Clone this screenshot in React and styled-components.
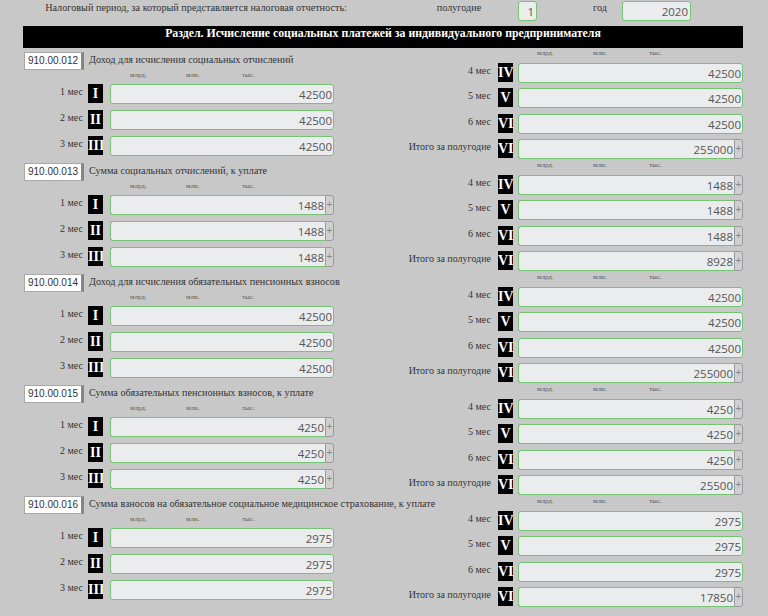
import React from 'react';
import styled, { createGlobalStyle } from 'styled-components';

const sections = [
  { code: '910.00.012', title: 'Доход для исчисления социальных отчислений', value: '42500', total: '255000', plusAll: false },
  { code: '910.00.013', title: 'Сумма социальных отчислений, к уплате', value: '1488', total: '8928', plusAll: true },
  { code: '910.00.014', title: 'Доход для исчисления обязательных пенсионных взносов', value: '42500', total: '255000', plusAll: false },
  { code: '910.00.015', title: 'Сумма обязательных пенсионных взносов, к уплате', value: '4250', total: '25500', plusAll: true },
  { code: '910.00.016', title: 'Сумма взносов на обязательное социальное медицинское страхование, к уплате', value: '2975', total: '17850', plusAll: false },
];

const leftRows = [
  { label: '1 мес', roman: 'I' },
  { label: '2 мес', roman: 'II' },
  { label: '3 мес', roman: 'III' },
];

const rightRows = [
  { label: '4 мес', roman: 'IV' },
  { label: '5 мес', roman: 'V' },
  { label: '6 мес', roman: 'VI' },
  { label: 'Итого за полугодие', roman: 'VII', total: true },
];

const Field = ({ value, plus, width, gap }) => (
  <FieldWrap $width={width} $gap={gap}>
    <NumInput readOnly value={value} $plus={plus} />
    {plus && <PlusBtn>+</PlusBtn>}
  </FieldWrap>
);

const Units = ({ offset, top }) => (
  <UnitsRow $offset={offset} $top={top}>
    <Unit>млрд.</Unit>
    <Unit>млн.</Unit>
    <Unit>тыс.</Unit>
  </UnitsRow>
);

const App = () => {
  return (
    <Page>
      <GlobalStyle />
      <HeaderRow>
        <HeaderText>Налоговый период, за который представляется налоговая отчетность:</HeaderText>
        <HeaderText $pad={8}>полугодие</HeaderText>
        <HeaderInput readOnly value="1" $w={19} />
        <HeaderText $pad={56} $left>год</HeaderText>
        <HeaderInput readOnly value="2020" $w={69} />
      </HeaderRow>

      <SectionBar>Раздел. Исчисление социальных платежей за индивидуального предпринимателя</SectionBar>

      <Body>
        <LeftCol>
          {sections.map((s) => (
            <LeftBlock key={s.code}>
              <TitleRow>
                <CodeBox>{s.code}</CodeBox>
                <BlockTitle>{s.title}</BlockTitle>
              </TitleRow>
              <Units offset={107} />
              <Rows>
                {leftRows.map((r) => (
                  <Row key={r.roman}>
                    <RowLabel $width={60}>{r.label}</RowLabel>
                    <Badge $gap={5}>{r.roman}</Badge>
                    <Field value={s.value} plus={s.plusAll} width={224} gap={7} />
                  </Row>
                ))}
              </Rows>
            </LeftBlock>
          ))}
        </LeftCol>

        <RightCol>
          {sections.map((s) => (
            <RightBlock key={s.code}>
              <Units offset={142} top />
              <RightRows>
                {rightRows.map((r) => (
                  <Row key={r.roman}>
                    <RowLabel $width={96}>{r.label}</RowLabel>
                    <Badge $gap={7}>{r.roman}</Badge>
                    <Field
                      value={r.total ? s.total : s.value}
                      plus={s.plusAll || r.total}
                      width={225}
                      gap={5}
                    />
                  </Row>
                ))}
              </RightRows>
            </RightBlock>
          ))}
        </RightCol>
      </Body>
    </Page>
  );
};

export default App;

const GlobalStyle = createGlobalStyle`
  html, body {
    margin: 0;
    padding: 0;
    background: #c8c8c8;
  }
  * {
    box-sizing: border-box;
  }
`;

const Page = styled.div`
  width: 768px;
  min-height: 616px;
  background: #c8c8c8;
  font-family: "Liberation Serif", "Tinos", "Times New Roman", serif;
  color: #333;
  overflow: hidden;
`;

const HeaderRow = styled.div`
  display: grid;
  grid-template-columns: 392px 126px 19px 85px 69px;
  height: 22px;
  align-items: start;
`;

const HeaderText = styled.div`
  font-size: 10.2px;
  line-height: 12px;
  padding-top: 2px;
  padding-left: ${(p) => p.$pad || 0}px;
  text-align: ${(p) => (p.$left ? 'left' : 'center')};
  white-space: nowrap;
  color: #333;
`;

const HeaderInput = styled.input`
  width: ${(p) => p.$w}px;
  height: 20px;
  margin-top: 1px;
  padding: 0 2px 0 0;
  border: 1.5px solid #74c474;
  border-radius: 3px;
  background: #eaecee;
  text-align: right;
  font-family: "Open Sans", "DejaVu Sans", sans-serif;
  font-size: 11.5px;
  color: #555;
  outline: none;
`;

const SectionBar = styled.div`
  margin: 4px 25px 0 23px;
  height: 22px;
  background: #000;
  color: #fff;
  font-weight: bold;
  font-size: 11.8px;
  line-height: 15px;
  padding-top: 0;
  text-align: center;
  white-space: nowrap;
`;

const Body = styled.div`
  display: flex;
  margin-top: 4px;
  padding-left: 23px;
`;

const LeftCol = styled.div`
  width: 372px;
  flex-shrink: 0;
  display: flex;
  flex-direction: column;
`;

const RightCol = styled.div`
  width: 350px;
  flex-shrink: 0;
  display: flex;
  flex-direction: column;
`;

const LeftBlock = styled.div`
  height: 111px;
  display: flex;
  flex-direction: column;
`;

const RightBlock = styled.div`
  height: 112px;
  display: flex;
  flex-direction: column;
`;

const TitleRow = styled.div`
  display: flex;
  align-items: center;
  height: 18px;
  padding-left: 1px;
`;

const CodeBox = styled.div`
  flex-shrink: 0;
  width: 60px;
  height: 18px;
  background: #fff;
  border: 1px solid #a8a8a8;
  border-right: 3px solid #858585;
  font-family: "Liberation Sans", Arial, sans-serif;
  font-size: 10px;
  line-height: 16px;
  color: #333;
  text-align: center;
  white-space: nowrap;
`;

const BlockTitle = styled.div`
  margin-left: 5px;
  font-size: 10.2px;
  line-height: 12px;
  margin-top: -2px;
  white-space: nowrap;
  color: #333;
`;

const UnitsRow = styled.div`
  display: flex;
  padding-left: ${(p) => p.$offset}px;
  height: ${(p) => (p.$top ? 14 : 14)}px;
  margin-top: ${(p) => (p.$top ? -3 : 0)}px;
  padding-top: ${(p) => (p.$top ? 0 : 1)}px;
  align-items: flex-start;
`;

const Unit = styled.span`
  width: 56px;
  font-size: 7px;
  line-height: 8px;
  color: #5a5a5a;
`;

const Rows = styled.div`
  display: flex;
  flex-direction: column;
  gap: 6px;
`;

const RightRows = styled.div`
  display: flex;
  flex-direction: column;
  gap: 5px;

  & > :nth-child(3) {
    margin-top: 1px;
  }
`;

const Row = styled.div`
  display: flex;
  align-items: flex-start;
  height: 20px;
`;

const RowLabel = styled.div`
  flex-shrink: 0;
  width: ${(p) => p.$width}px;
  text-align: right;
  font-size: 10px;
  line-height: 12px;
  padding-top: 2px;
  white-space: nowrap;
  color: #333;
`;

const Badge = styled.div`
  flex-shrink: 0;
  width: 15px;
  height: 19px;
  margin-left: ${(p) => p.$gap}px;
  background: #000;
  color: #fff;
  font-weight: bold;
  font-size: 14px;
  line-height: 19px;
  text-align: center;
  overflow: hidden;
  white-space: nowrap;
`;

const FieldWrap = styled.div`
  flex-shrink: 0;
  display: flex;
  width: ${(p) => p.$width}px;
  height: 20px;
  margin-left: ${(p) => p.$gap}px;
`;

const NumInput = styled.input`
  flex: 1;
  min-width: 0;
  height: 20px;
  padding: 0 1px 0 4px;
  border: 1.5px solid #74c474;
  border-right-width: ${(p) => (p.$plus ? '0' : '1.5px')};
  border-radius: ${(p) => (p.$plus ? '3px 0 0 3px' : '3px')};
  background: #eaecee;
  text-align: right;
  font-family: "Open Sans", "DejaVu Sans", sans-serif;
  font-size: 11.5px;
  color: #555;
  outline: none;
`;

const PlusBtn = styled.div`
  width: 9px;
  height: 20px;
  border: 1px solid #9a9a9a;
  border-radius: 0 3px 3px 0;
  background: #d0d0d0;
  color: #888;
  font-family: "Liberation Sans", Arial, sans-serif;
  font-size: 10px;
  line-height: 18px;
  text-align: center;
`;
